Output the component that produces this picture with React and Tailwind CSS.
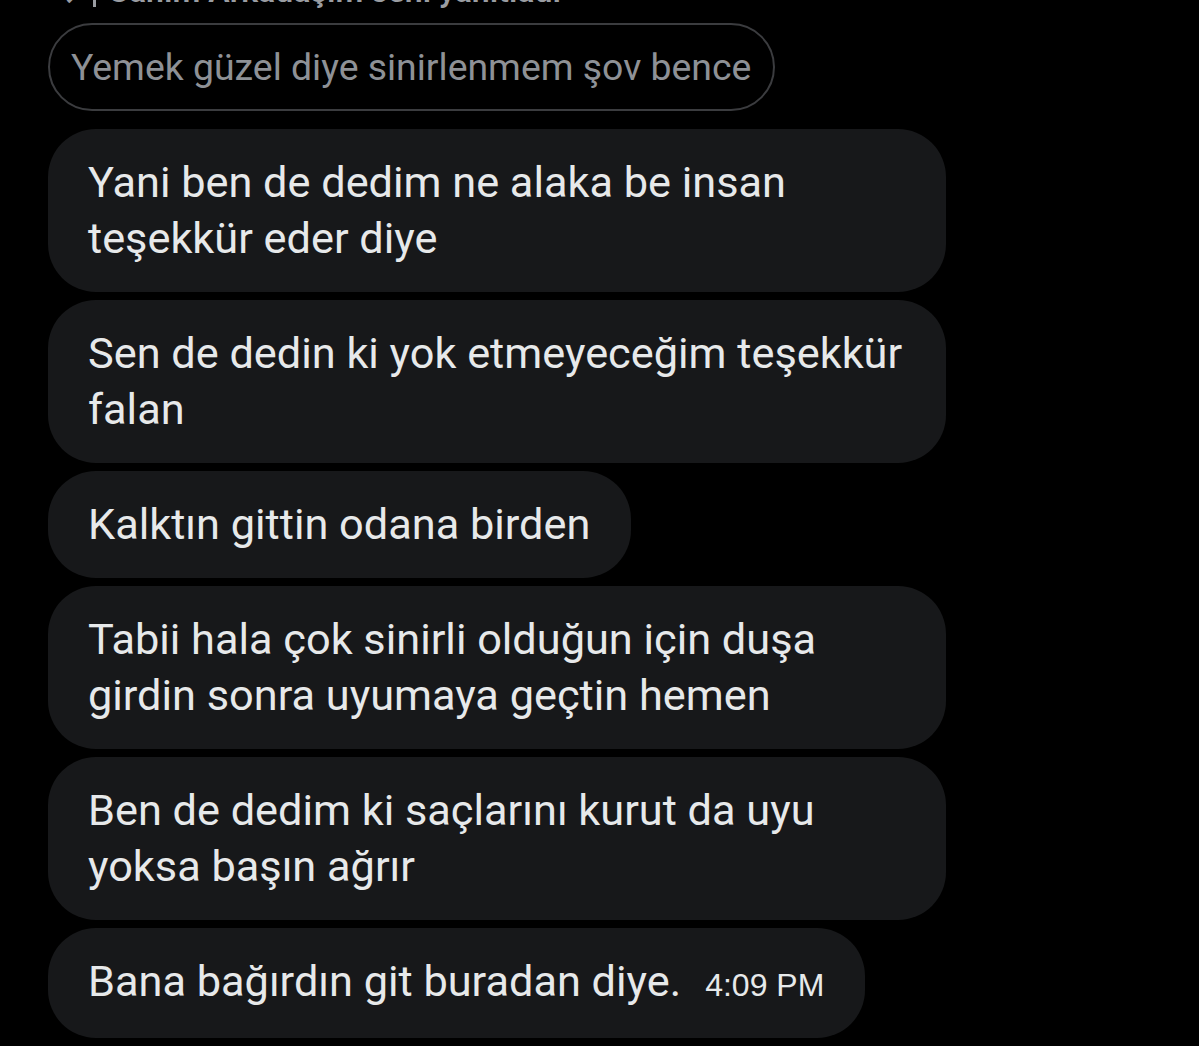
import React from "react";

const msgs = [
  "Yani ben de dedim ne alaka be insan teşekkür eder diye",
  "Sen de dedin ki yok etmeyeceğim teşekkür falan",
  "Kalktın gittin odana birden",
  "Tabii hala çok sinirli olduğun için duşa girdin sonra uyumaya geçtin hemen",
  "Ben de dedim ki saçlarını kurut da uyu yoksa başın ağrır",
];

export default function App() {
  return (
    <div className="w-[1199px] h-[1046px] bg-black overflow-hidden" style={{ fontFamily: "Roboto, 'Noto Sans', sans-serif" }}>
      <div className="h-[8px] overflow-hidden relative">
        <div className="absolute left-[54px] top-[-25px] flex items-center gap-3 text-[32px] leading-[32px] font-semibold text-[#9a9da2]">
          <span>↳</span>
          <span className="w-[3px] h-[32px] bg-[#9a9da2]"></span>
          <span>Canım Arkadaşım seni yanıtladı</span>
        </div>
      </div>
      <div className="pl-[48px] pt-[15px] flex flex-col items-start gap-[8px]">
        <div className="h-[88px] flex items-center border-2 border-[#3b3c3f] rounded-full pl-[21px] pr-[22px] text-[37.4px] text-[#8e9196] mb-[10px]">
          Yemek güzel diye sinirlenmem şov bence
        </div>
        {msgs.map((m, i) => (
          <div key={i} className="max-w-[898px] bg-[#17181a] rounded-[48px] pl-[40px] pr-[41px] pt-[26px] pb-[25px] text-[43.3px] leading-[56px] text-[#e7e9ea]">
            {m}
          </div>
        ))}
        <div className="max-w-[898px] bg-[#17181a] rounded-[48px] pl-[40px] pr-[41px] pt-[26px] pb-[25px] text-[43.3px] leading-[56px] text-[#e7e9ea] flex items-baseline">
          <span>Bana bağırdın git buradan diye.</span>
          <span className="ml-[24px] text-[32px] text-[#e7e9ea]" style={{ fontFamily: "'Liberation Sans', Arial, sans-serif" }}>4:09 PM</span>
        </div>
      </div>
    </div>
  );
}
